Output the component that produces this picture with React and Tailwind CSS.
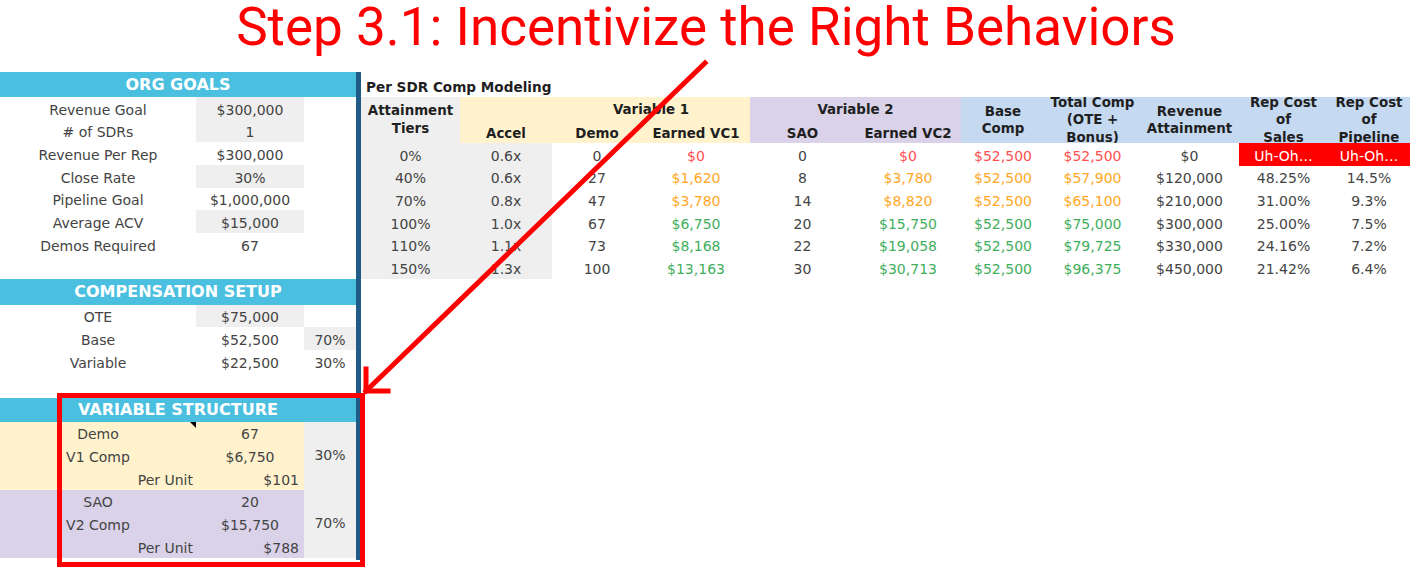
const ROW = 'h-[22.7px]';

const orgGoals = [
  { label: 'Revenue Goal', value: '$300,000', gray: true },
  { label: '# of SDRs', value: '1', gray: true },
  { label: 'Revenue Per Rep', value: '$300,000' },
  { label: 'Close Rate', value: '30%', gray: true },
  { label: 'Pipeline Goal', value: '$1,000,000' },
  { label: 'Average ACV', value: '$15,000', gray: true },
  { label: 'Demos Required', value: '67' },
];

const tiers = [
  { tone: 'red', cells: ['0%', '0.6x', '0', '$0', '0', '$0', '$52,500', '$52,500', '$0', 'Uh-Oh…', 'Uh-Oh…'] },
  { tone: 'orange', cells: ['40%', '0.6x', '27', '$1,620', '8', '$3,780', '$52,500', '$57,900', '$120,000', '48.25%', '14.5%'] },
  { tone: 'orange', cells: ['70%', '0.8x', '47', '$3,780', '14', '$8,820', '$52,500', '$65,100', '$210,000', '31.00%', '9.3%'] },
  { tone: 'green', cells: ['100%', '1.0x', '67', '$6,750', '20', '$15,750', '$52,500', '$75,000', '$300,000', '25.00%', '7.5%'] },
  { tone: 'green', cells: ['110%', '1.1x', '73', '$8,168', '22', '$19,058', '$52,500', '$79,725', '$330,000', '24.16%', '7.2%'] },
  { tone: 'green', cells: ['150%', '1.3x', '100', '$13,163', '30', '$30,713', '$52,500', '$96,375', '$450,000', '21.42%', '6.4%'] },
];

const toneText = {
  red: 'text-[#ff5050]',
  orange: 'text-[#ffa726]',
  green: 'text-[#3fae5c]',
};

const COLS = 'grid grid-cols-[99px_92px_90px_108px_105px_106px_84px_95px_99px_89px_82px]';

function SectionHeader({ children, className = '' }) {
  return (
    <div
      className={`flex items-center justify-center bg-[#4bbfe0] text-[16px] font-bold leading-none text-white ${className}`}
    >
      {children}
    </div>
  );
}

function Cell({ children, className = '', color = 'text-[#444]' }) {
  return (
    <div className={`flex items-end pb-[2px] text-[14px] leading-[16px] ${color} ${ROW} ${className}`}>
      {children}
    </div>
  );
}

function LeftPanel() {
  return (
    <div className="flex w-[356px] flex-col">
      <SectionHeader className="h-[25px]">ORG GOALS</SectionHeader>
      {orgGoals.map((r) => (
        <div key={r.label} className="grid grid-cols-[196px_108px_52px]">
          <Cell className="justify-center">{r.label}</Cell>
          <Cell className={`justify-center ${r.gray ? 'bg-[#efefef]' : ''}`}>{r.value}</Cell>
          <Cell />
        </div>
      ))}
      <div className={ROW} />

      <SectionHeader className="h-[26px]">COMPENSATION SETUP</SectionHeader>
      <div className="grid grid-cols-[196px_108px_52px]">
        <Cell className="justify-center">OTE</Cell>
        <Cell className="justify-center bg-[#efefef]">$75,000</Cell>
        <Cell />
        <Cell className="justify-center">Base</Cell>
        <Cell className="justify-center">$52,500</Cell>
        <Cell className="justify-center bg-[#efefef]">70%</Cell>
        <Cell className="justify-center">Variable</Cell>
        <Cell className="justify-center">$22,500</Cell>
        <Cell className="justify-center">30%</Cell>
      </div>
      <div className="h-[25px]" />

      <SectionHeader className="h-[24px]">VARIABLE STRUCTURE</SectionHeader>
      <VariableBlock bg="bg-[#fff2cc]" unit="Demo" count="67" comp="V1 Comp" amount="$6,750" per="$101" pct="30%" note />
      <VariableBlock bg="bg-[#d9d2e9]" unit="SAO" count="20" comp="V2 Comp" amount="$15,750" per="$788" pct="70%" />
    </div>
  );
}

function VariableBlock({ bg, unit, count, comp, amount, per, pct, note }) {
  return (
    <div className="grid grid-cols-[304px_52px]">
      <div className={`grid grid-cols-[196px_108px] ${bg}`}>
        <Cell className="relative justify-center">
          {unit}
          {note && (
            <span className="absolute right-0 top-0 h-0 w-0 border-l-[6px] border-t-[6px] border-l-transparent border-t-black" />
          )}
        </Cell>
        <Cell className="justify-center">{count}</Cell>
        <Cell className="justify-center">{comp}</Cell>
        <Cell className="justify-center">{amount}</Cell>
        <Cell className="justify-end pr-[3px]">Per Unit</Cell>
        <Cell className="justify-end pr-[5px]">{per}</Cell>
      </div>
      <div className="flex items-center justify-center bg-[#efefef] text-[14px] text-[#444]">{pct}</div>
    </div>
  );
}

function HeadText({ children, className = '' }) {
  return (
    <div
      className={`flex items-center justify-center overflow-hidden text-center text-[13.4px] font-bold leading-[17.5px] text-[#1f1f1f] ${className}`}
    >
      {children}
    </div>
  );
}

function CompTable() {
  return (
    <div className="flex flex-col">
      <div className="flex h-[25px] items-end pb-[2px] pl-[5px] text-[13.6px] font-bold leading-none text-[#1f1f1f]">
        Per SDR Comp Modeling
      </div>
      <div className={`${COLS} h-[46px] grid-rows-[23px_23px]`}>
        <HeadText className="row-span-2 bg-[#efefef] leading-[18px]">
          Attainment
          <br />
          Tiers
        </HeadText>
        <div className="bg-[#fff2cc]" />
        <HeadText className="col-span-2 bg-[#fff2cc] pt-[2px]">Variable 1</HeadText>
        <HeadText className="col-span-2 bg-[#d9d2e9] pt-[2px]">Variable 2</HeadText>
        <HeadText className="row-span-2 bg-[#c5d9f1]">
          Base
          <br />
          Comp
        </HeadText>
        <HeadText className="row-span-2 bg-[#c5d9f1]">
          Total Comp
          <br />
          (OTE +
          <br />
          Bonus)
        </HeadText>
        <HeadText className="row-span-2 bg-[#c5d9f1]">
          Revenue
          <br />
          Attainment
        </HeadText>
        <HeadText className="row-span-2 bg-[#c5d9f1]">
          Rep Cost
          <br />
          of
          <br />
          Sales
        </HeadText>
        <HeadText className="row-span-2 bg-[#c5d9f1]">
          Rep Cost
          <br />
          of
          <br />
          Pipeline
        </HeadText>
        <HeadText className="bg-[#fff2cc] pt-[4px]">Accel</HeadText>
        <HeadText className="bg-[#fff2cc] pt-[4px]">Demo</HeadText>
        <HeadText className="bg-[#fff2cc] pt-[4px]">Earned VC1</HeadText>
        <HeadText className="bg-[#d9d2e9] pt-[4px]">SAO</HeadText>
        <HeadText className="bg-[#d9d2e9] pt-[4px]">Earned VC2</HeadText>
      </div>
      {tiers.map((row) => (
        <div key={row.cells[0]} className={COLS}>
          {row.cells.map((c, i) => {
            let cls = 'justify-center';
            let color = 'text-[#444]';
            if (i < 2) cls += ' bg-[#efefef]';
            if (i === 3 || i === 5 || i === 6 || i === 7) color = toneText[row.tone];
            if (c.startsWith('Uh')) {
              cls += ' bg-[#ff0000]';
              color = 'text-white';
            }
            return (
              <Cell key={i} className={cls} color={color}>
                {c}
              </Cell>
            );
          })}
        </div>
      ))}
    </div>
  );
}

export default function App() {
  return (
    <div className="relative h-[572px] w-[1416px] overflow-hidden bg-white font-['DejaVu_Sans',sans-serif]">
      <div className="flex h-[72px] items-start justify-center pr-[4px]">
        <h1 className="font-['Roboto',sans-serif] text-[53px] font-normal leading-[54px] text-[#ff0000]">
          Step 3.1: Incentivize the Right Behaviors
        </h1>
      </div>
      <div className="flex">
        <LeftPanel />
        <div className="h-[488px] w-[5px] bg-[#1f5b86]" />
        <CompTable />
      </div>

      <svg className="pointer-events-none absolute inset-0" width="1416" height="572" viewBox="0 0 1416 572">
        <g stroke="#ff0000" strokeWidth="5" fill="none" strokeLinecap="square">
          <line x1="705" y1="63" x2="366" y2="391" />
          <polyline points="366,369 366,391 388,391" />
        </g>
      </svg>
      <div className="pointer-events-none absolute left-[57px] top-[393px] h-[174px] w-[308px] border-[5px] border-[#ff0000]" />
    </div>
  );
}
